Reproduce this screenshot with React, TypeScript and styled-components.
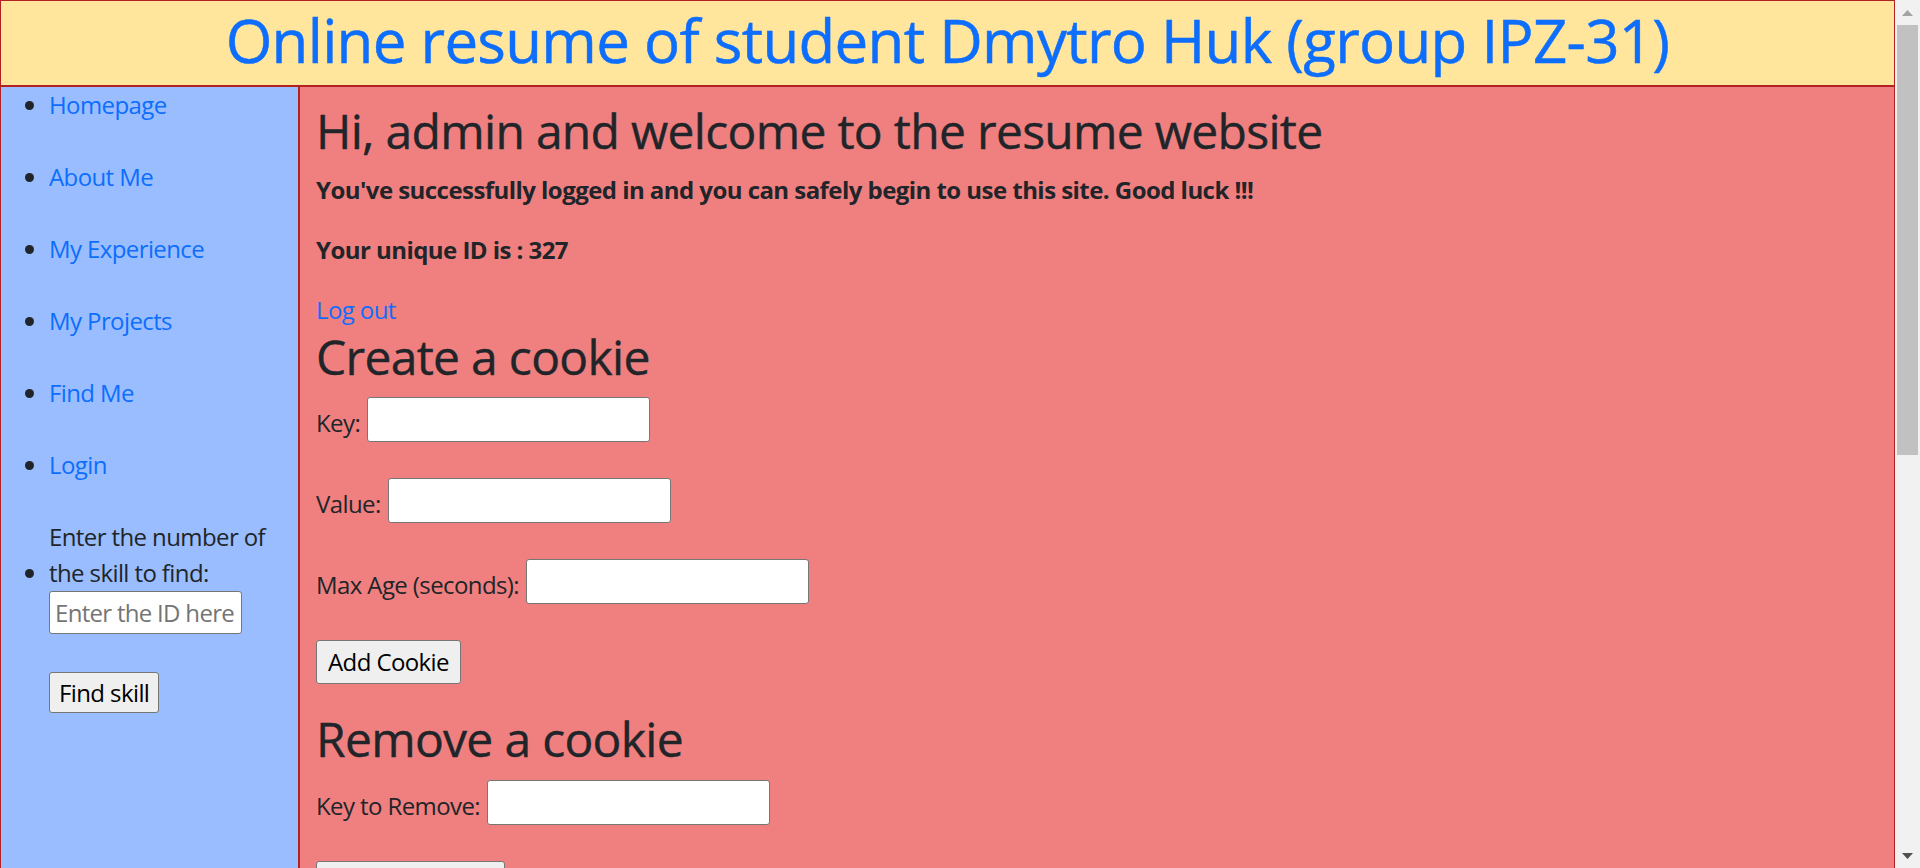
import React from "react";
import styled, { createGlobalStyle } from "styled-components";

const Global = createGlobalStyle`
  * { box-sizing: border-box; }
  html, body { height: 100%; }
  body {
    margin: 0;
    font-family: "Open Sans", sans-serif;
    font-size: 24px;
    line-height: 36px;
    letter-spacing: -0.6px;
    color: #212529;
    background: #fff;
    overflow: hidden;
  }
  #root { height: 100%; }
`;

const Viewport = styled.div`
  display: flex;
  height: 100%;
`;

const Scroller = styled.div`
  flex: 1;
  min-width: 0;
  overflow: hidden;
`;

const ScrollRail = styled.div`
  width: 25px;
  flex-shrink: 0;
  display: flex;
  flex-direction: column;
  background: #f1f1f1;
`;

const ArrowButton = styled.div<{ $bottom?: boolean }>`
  height: 25px;
  display: flex;
  align-items: center;
  justify-content: center;
  margin-top: ${(p) => (p.$bottom ? "auto" : "0")};
`;

const Thumb = styled.div`
  margin: 0 2px;
  height: 430px;
  background: #c1c1c1;
`;

const Header = styled.header`
  height: 86px;
  background: #ffe69c;
  border: 1px solid #b22222;
  text-align: center;
`;

const Title = styled.h1`
  margin: 0;
  padding-top: 3px;
  font-size: 60px;
  line-height: 72px;
  font-weight: 400;
  color: #0d6efd;
  letter-spacing: -0.7px;
  -webkit-text-stroke: 0.5px #0d6efd;
`;

const Layout = styled.div`
  display: flex;
`;

const Sidebar = styled.nav`
  width: 299px;
  flex-shrink: 0;
  background: #99bdfe;
  border: 1px solid #b22222;
`;

const NavList = styled.ul`
  margin: 0;
  padding: 0 0 0 48px;
`;

const NavItem = styled.li`
  margin-bottom: 36px;
`;

const NavLink = styled.a`
  color: #0d6efd;
  text-decoration: none;
`;

const SkillLabel = styled.label`
  display: inline-block;
`;

const TextInput = styled.input<{ $w: number; $h: number; $block?: boolean }>`
  display: ${(p) => (p.$block ? "block" : "inline-block")};
  width: ${(p) => p.$w}px;
  height: ${(p) => p.$h}px;
  margin: 0;
  padding: 1px 5px;
  border: 1px solid #767676;
  border-radius: 3px;
  background: #fff;
  font-family: "Open Sans", sans-serif;
  font-size: 24px;
  letter-spacing: -0.7px;
  color: #212529;
  &::placeholder { color: #757575; }
`;

const Button = styled.button<{ $top?: number }>`
  display: block;
  margin: ${(p) => p.$top ?? 0}px 0 0 0;
  padding: 0 11px;
  height: 44px;
  border: 1px solid #767676;
  border-radius: 3px;
  background: #efefef;
  color: #000;
  font-family: "Open Sans", sans-serif;
  font-size: 24px;
  letter-spacing: -0.6px;
  line-height: 36px;
`;

const SmallButton = styled(Button)`
  height: 41px;
  padding: 0 9px;
`;

const Main = styled.main`
  flex: 1;
  min-height: 782px;
  background: #f08080;
  border: 1px solid #b22222;
  padding: 15px 16px;
`;

const Heading = styled.h2`
  margin: 0 0 12px;
  font-size: 48px;
  line-height: 1.2;
  font-weight: 400;
  letter-spacing: -0.7px;
  -webkit-text-stroke: 0.4px #212529;
`;

const Para = styled.p`
  margin: 0 0 24px;
  font-weight: 700;
  letter-spacing: -0.55px;
`;

const LinkLine = styled.div``;

const Form = styled.form`
  display: flex;
  flex-direction: column;
  align-items: flex-start;
  gap: 36px;
  margin-bottom: 26px;
`;

const FormRow = styled.div`
  display: flex;
  align-items: flex-end;
  gap: 7px;
  height: 45px;
`;

const FieldLabel = styled.label`
  line-height: 36px;
  margin-bottom: 1px;
`;

const navItems = ["Homepage", "About Me", "My Experience", "My Projects", "Find Me", "Login"];

export default function App() {
  return (
    <Viewport>
      <Global />
      <Scroller>
        <Header>
          <Title>Online resume of student Dmytro Huk (group IPZ-31)</Title>
        </Header>
        <Layout>
          <Sidebar>
            <NavList>
              {navItems.map((n) => (
                <NavItem key={n}>
                  <NavLink href="#">{n}</NavLink>
                </NavItem>
              ))}
              <NavItem>
                <SkillLabel htmlFor="skill">Enter the number of the skill to find:</SkillLabel>
                <TextInput id="skill" $block $w={193} $h={43} placeholder="Enter the ID here" />
                <SmallButton type="button" $top={38}>Find skill</SmallButton>
              </NavItem>
            </NavList>
          </Sidebar>
          <Main>
            <Heading>Hi, admin and welcome to the resume website</Heading>
            <Para>You've successfully logged in and you can safely begin to use this site. Good luck !!!</Para>
            <Para>Your unique ID is : 327</Para>
            <LinkLine>
              <NavLink href="#">Log out</NavLink>
            </LinkLine>
            <Heading>Create a cookie</Heading>
            <Form onSubmit={(e) => e.preventDefault()}>
              <FormRow>
                <FieldLabel htmlFor="k">Key:</FieldLabel>
                <TextInput id="k" $w={283} $h={45} />
              </FormRow>
              <FormRow>
                <FieldLabel htmlFor="v">Value:</FieldLabel>
                <TextInput id="v" $w={283} $h={45} />
              </FormRow>
              <FormRow>
                <FieldLabel htmlFor="m">Max Age (seconds):</FieldLabel>
                <TextInput id="m" $w={283} $h={45} />
              </FormRow>
              <Button type="submit">Add Cookie</Button>
            </Form>
            <Heading>Remove a cookie</Heading>
            <Form onSubmit={(e) => e.preventDefault()}>
              <FormRow>
                <FieldLabel htmlFor="r">Key to Remove:</FieldLabel>
                <TextInput id="r" $w={283} $h={45} />
              </FormRow>
              <Button type="submit">Remove Cookie</Button>
            </Form>
          </Main>
        </Layout>
      </Scroller>
      <ScrollRail aria-hidden="true">
        <ArrowButton>
          <svg width="11" height="6" viewBox="0 0 11 6">
            <polygon points="0,6 5.5,0 11,6" fill="#a3a3a3" />
          </svg>
        </ArrowButton>
        <Thumb />
        <ArrowButton $bottom>
          <svg width="11" height="6" viewBox="0 0 11 6">
            <polygon points="0,0 11,0 5.5,6" fill="#505050" />
          </svg>
        </ArrowButton>
      </ScrollRail>
    </Viewport>
  );
}
